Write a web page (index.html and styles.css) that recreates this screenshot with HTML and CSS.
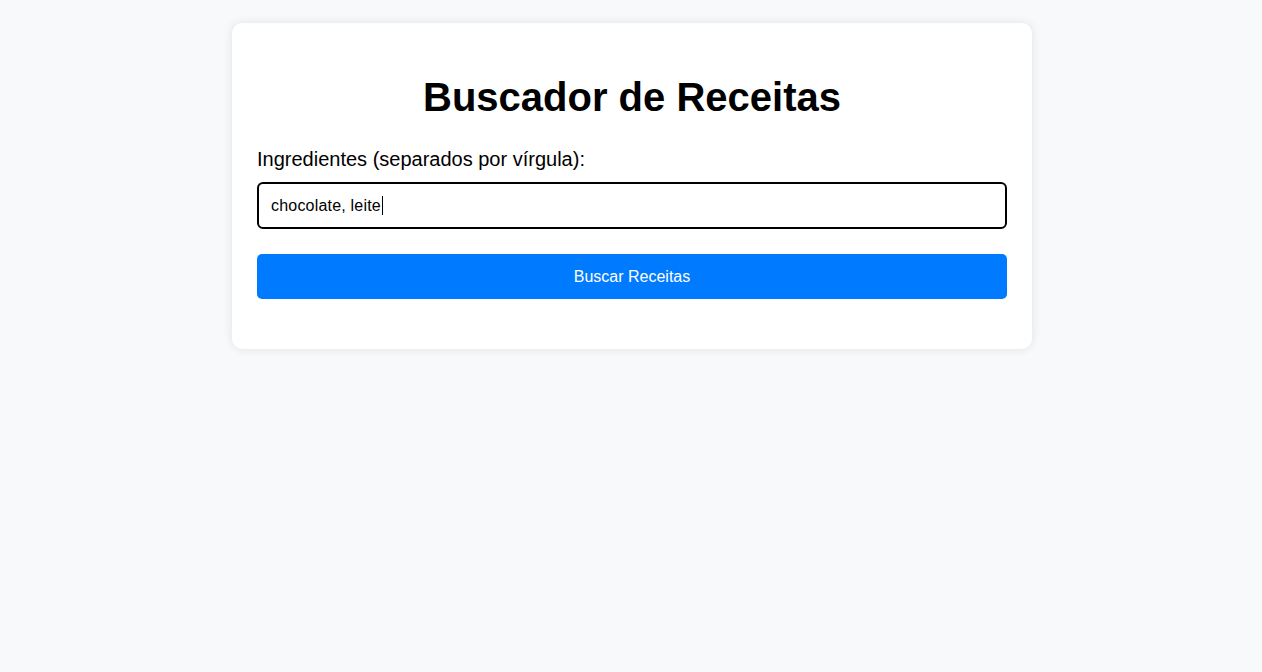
FILE: index.html
```html
<!DOCTYPE html>
<html lang="pt">
<head>
<meta charset="utf-8">
<title>Buscador de Receitas</title>
<link rel="stylesheet" href="styles.css">
</head>
<body>
<div class="card">
  <h1 class="title">Buscador de Receitas</h1>
  <label class="label" for="ing">Ingredientes (separados por vírgula):</label>
  <div class="field">chocolate, leite<span class="caret"></span></div>
  <button class="btn" type="button">Buscar Receitas</button>
  <div class="results"></div>
</div>
</body>
</html>
```
FILE: styles.css
```css
* { box-sizing: border-box; }
html, body {
  margin: 0;
  background: #f8f9fa;
  font-family: "Liberation Sans", Arial, sans-serif;
  color: #000;
}
body {
  padding: 23px 0;
}
.card {
  width: 800px;
  margin: 0 0 0 232px;
  background: #fff;
  border-radius: 10px;
  box-shadow: 0 0 10px rgba(0, 0, 0, 0.1);
  padding: 25px 25px 25px;
  display: flex;
  flex-direction: column;
}
.title {
  font-size: 40px;
  font-weight: bold;
  text-align: center;
  line-height: 46px;
  margin: 26px 0 28px;
}
.label {
  font-size: 20px;
  line-height: 23px;
  margin-bottom: 11px;
}
.field {
  height: 47px;
  border: 2px solid #000;
  border-radius: 6px;
  padding: 0 12px;
  font-size: 16px;
  letter-spacing: 0.2px;
  display: flex;
  align-items: center;
}
.caret {
  display: inline-block;
  width: 1px;
  height: 19px;
  background: #000;
  margin-left: 1px;
}
.btn {
  margin-top: 25px;
  height: 45px;
  border: none;
  border-radius: 5px;
  background: #007bff;
  color: #fff;
  font-family: "Liberation Sans", Arial, sans-serif;
  font-size: 16px;
}
.results {
  height: 25px;
}
```
